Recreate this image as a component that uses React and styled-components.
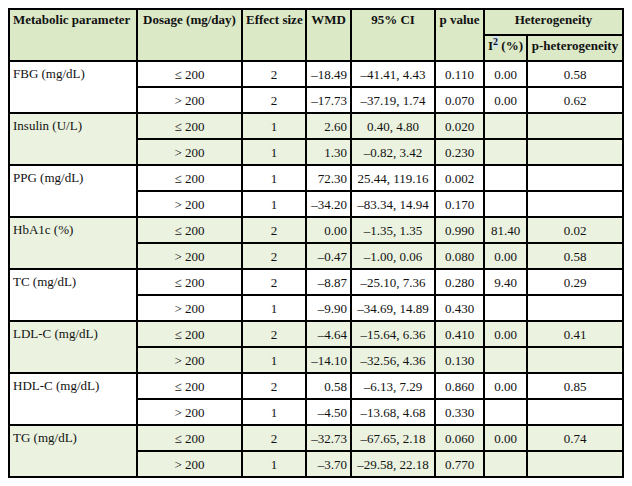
import React from "react";
import styled, { createGlobalStyle } from "styled-components";

const GlobalStyle = createGlobalStyle`
    body {
        margin: 8px;
        background: #ffffff;
        font-family: "Liberation Serif", "Times New Roman", Tinos, "DejaVu Serif", serif;
        color: #111111;
    }
`;

const Table = styled.table`
    width: 616px;
    table-layout: fixed;
    border-collapse: collapse;
    border: 2px solid #000;
    font-family: "Liberation Serif", "Times New Roman", Tinos, "DejaVu Serif", serif;
    font-size: 13px;
    line-height: 15px;
    color: #111111;
`;

const HeadRow = styled.tr`
    height: 26px;
    background: #dbe9c7;
`;

const HeadCell = styled.th`
    border: 2px solid #000;
    padding: 2px 3px 0 3px;
    vertical-align: top;
    text-align: ${(p) => p.$align || "center"};
    font-weight: 700;
    white-space: nowrap;
`;

const Sup = styled.sup`
    font-size: 10px;
    line-height: 0;
    background: #cfe3f5;
`;

const Row = styled.tr`
    height: 26px;
    background: ${(p) => (p.$shade ? "#ebf3e0" : "#ffffff")};
`;

const Cell = styled.td`
    border: 2px solid #000;
    padding: 0 3px;
    vertical-align: ${(p) => (p.$top ? "top" : "middle")};
    padding-top: ${(p) => (p.$top ? "4px" : "0")};
    text-align: ${(p) => p.$align || "center"};
    white-space: nowrap;
`;

const rows = [
    { name: "FBG (mg/dL)", sub: [["≤  200", "2", "–18.49", "–41.41, 4.43", "0.110", "0.00", "0.58"], ["> 200", "2", "–17.73", "–37.19, 1.74", "0.070", "0.00", "0.62"]] },
    { name: "Insulin (U/L)", sub: [["≤  200", "1", "2.60", "0.40, 4.80", "0.020", "", ""], ["> 200", "1", "1.30", "–0.82, 3.42", "0.230", "", ""]] },
    { name: "PPG (mg/dL)", sub: [["≤  200", "1", "72.30", "25.44, 119.16", "0.002", "", ""], ["> 200", "1", "–34.20", "–83.34, 14.94", "0.170", "", ""]] },
    { name: "HbA1c (%)", sub: [["≤  200", "2", "0.00", "–1.35, 1.35", "0.990", "81.40", "0.02"], ["> 200", "2", "–0.47", "–1.00, 0.06", "0.080", "0.00", "0.58"]] },
    { name: "TC (mg/dL)", sub: [["≤  200", "2", "–8.87", "–25.10, 7.36", "0.280", "9.40", "0.29"], ["> 200", "1", "–9.90", "–34.69, 14.89", "0.430", "", ""]] },
    { name: "LDL-C (mg/dL)", sub: [["≤  200", "2", "–4.64", "–15.64, 6.36", "0.410", "0.00", "0.41"], ["> 200", "1", "–14.10", "–32.56, 4.36", "0.130", "", ""]] },
    { name: "HDL-C (mg/dL)", sub: [["≤  200", "2", "0.58", "–6.13, 7.29", "0.860", "0.00", "0.85"], ["> 200", "1", "–4.50", "–13.68, 4.68", "0.330", "", ""]] },
    { name: "TG (mg/dL)", sub: [["≤  200", "2", "–32.73", "–67.65, 2.18", "0.060", "0.00", "0.74"], ["> 200", "1", "–3.70", "–29.58, 22.18", "0.770", "", ""]] },
];

function App() {
    return (
        <>
            <GlobalStyle />
            <Table>
                <colgroup>
                    <col style={{ width: 128 }} />
                    <col style={{ width: 105 }} />
                    <col style={{ width: 64 }} />
                    <col style={{ width: 45 }} />
                    <col style={{ width: 84 }} />
                    <col style={{ width: 49 }} />
                    <col style={{ width: 43 }} />
                    <col style={{ width: 96 }} />
                </colgroup>
                <thead>
                    <HeadRow>
                        <HeadCell rowSpan={2} $align="left">Metabolic parameter</HeadCell>
                        <HeadCell rowSpan={2}>Dosage (mg/day)</HeadCell>
                        <HeadCell rowSpan={2}>Effect size</HeadCell>
                        <HeadCell rowSpan={2}>WMD</HeadCell>
                        <HeadCell rowSpan={2}>95% CI</HeadCell>
                        <HeadCell rowSpan={2}>p value</HeadCell>
                        <HeadCell colSpan={2}>Heterogeneity</HeadCell>
                    </HeadRow>
                    <HeadRow>
                        <HeadCell>
                            I<Sup>2</Sup> (%)
                        </HeadCell>
                        <HeadCell>p-heterogeneity</HeadCell>
                    </HeadRow>
                </thead>
                <tbody>
                    {rows.map((r, i) =>
                        r.sub.map((s, j) => (
                            <Row key={r.name + j} $shade={i % 2 === 1}>
                                {j === 0 && (
                                    <Cell rowSpan={2} $align="left" $top>
                                        {r.name}
                                    </Cell>
                                )}
                                <Cell>{s[0]}</Cell>
                                <Cell>{s[1]}</Cell>
                                <Cell $align="right">{s[2]}</Cell>
                                <Cell>{s[3]}</Cell>
                                <Cell>{s[4]}</Cell>
                                <Cell>{s[5]}</Cell>
                                <Cell>{s[6]}</Cell>
                            </Row>
                        ))
                    )}
                </tbody>
            </Table>
        </>
    );
}

export default App;
